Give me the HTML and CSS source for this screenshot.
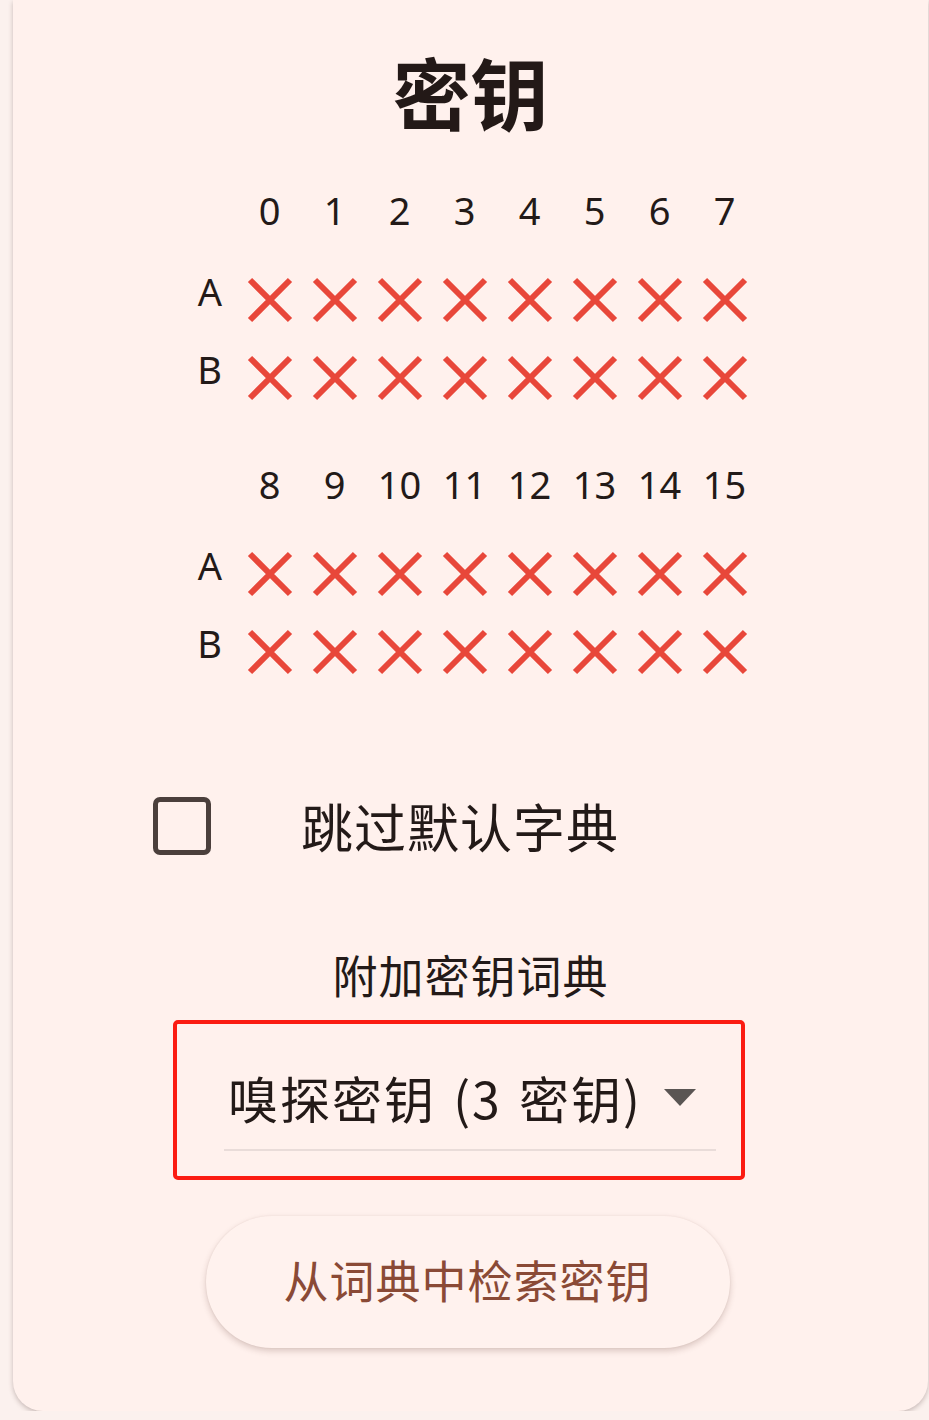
FILE: index.html
```html
<!DOCTYPE html>
<html lang="zh">
<head>
<meta charset="utf-8">
<link rel="stylesheet" href="styles.css">
</head>
<body>
<div class="card">
  <h1 class="title">密钥</h1>

  <div class="keygrid">
    <div class="cell head"></div>
    <div class="cell head">0</div><div class="cell head">1</div><div class="cell head">2</div><div class="cell head">3</div>
    <div class="cell head">4</div><div class="cell head">5</div><div class="cell head">6</div><div class="cell head">7</div>

    <div class="cell lbl">A</div>
    <div class="cell x"><svg viewBox="0 0 46 46"><path d="M3 3L43 43M43 3L3 43"/></svg></div>
    <div class="cell x"><svg viewBox="0 0 46 46"><path d="M3 3L43 43M43 3L3 43"/></svg></div>
    <div class="cell x"><svg viewBox="0 0 46 46"><path d="M3 3L43 43M43 3L3 43"/></svg></div>
    <div class="cell x"><svg viewBox="0 0 46 46"><path d="M3 3L43 43M43 3L3 43"/></svg></div>
    <div class="cell x"><svg viewBox="0 0 46 46"><path d="M3 3L43 43M43 3L3 43"/></svg></div>
    <div class="cell x"><svg viewBox="0 0 46 46"><path d="M3 3L43 43M43 3L3 43"/></svg></div>
    <div class="cell x"><svg viewBox="0 0 46 46"><path d="M3 3L43 43M43 3L3 43"/></svg></div>
    <div class="cell x"><svg viewBox="0 0 46 46"><path d="M3 3L43 43M43 3L3 43"/></svg></div>

    <div class="cell lbl">B</div>
    <div class="cell x"><svg viewBox="0 0 46 46"><path d="M3 3L43 43M43 3L3 43"/></svg></div>
    <div class="cell x"><svg viewBox="0 0 46 46"><path d="M3 3L43 43M43 3L3 43"/></svg></div>
    <div class="cell x"><svg viewBox="0 0 46 46"><path d="M3 3L43 43M43 3L3 43"/></svg></div>
    <div class="cell x"><svg viewBox="0 0 46 46"><path d="M3 3L43 43M43 3L3 43"/></svg></div>
    <div class="cell x"><svg viewBox="0 0 46 46"><path d="M3 3L43 43M43 3L3 43"/></svg></div>
    <div class="cell x"><svg viewBox="0 0 46 46"><path d="M3 3L43 43M43 3L3 43"/></svg></div>
    <div class="cell x"><svg viewBox="0 0 46 46"><path d="M3 3L43 43M43 3L3 43"/></svg></div>
    <div class="cell x"><svg viewBox="0 0 46 46"><path d="M3 3L43 43M43 3L3 43"/></svg></div>
  </div>

  <div class="keygrid second">
    <div class="cell head"></div>
    <div class="cell head">8</div><div class="cell head">9</div><div class="cell head">10</div><div class="cell head">11</div>
    <div class="cell head">12</div><div class="cell head">13</div><div class="cell head">14</div><div class="cell head">15</div>

    <div class="cell lbl">A</div>
    <div class="cell x"><svg viewBox="0 0 46 46"><path d="M3 3L43 43M43 3L3 43"/></svg></div>
    <div class="cell x"><svg viewBox="0 0 46 46"><path d="M3 3L43 43M43 3L3 43"/></svg></div>
    <div class="cell x"><svg viewBox="0 0 46 46"><path d="M3 3L43 43M43 3L3 43"/></svg></div>
    <div class="cell x"><svg viewBox="0 0 46 46"><path d="M3 3L43 43M43 3L3 43"/></svg></div>
    <div class="cell x"><svg viewBox="0 0 46 46"><path d="M3 3L43 43M43 3L3 43"/></svg></div>
    <div class="cell x"><svg viewBox="0 0 46 46"><path d="M3 3L43 43M43 3L3 43"/></svg></div>
    <div class="cell x"><svg viewBox="0 0 46 46"><path d="M3 3L43 43M43 3L3 43"/></svg></div>
    <div class="cell x"><svg viewBox="0 0 46 46"><path d="M3 3L43 43M43 3L3 43"/></svg></div>

    <div class="cell lbl">B</div>
    <div class="cell x"><svg viewBox="0 0 46 46"><path d="M3 3L43 43M43 3L3 43"/></svg></div>
    <div class="cell x"><svg viewBox="0 0 46 46"><path d="M3 3L43 43M43 3L3 43"/></svg></div>
    <div class="cell x"><svg viewBox="0 0 46 46"><path d="M3 3L43 43M43 3L3 43"/></svg></div>
    <div class="cell x"><svg viewBox="0 0 46 46"><path d="M3 3L43 43M43 3L3 43"/></svg></div>
    <div class="cell x"><svg viewBox="0 0 46 46"><path d="M3 3L43 43M43 3L3 43"/></svg></div>
    <div class="cell x"><svg viewBox="0 0 46 46"><path d="M3 3L43 43M43 3L3 43"/></svg></div>
    <div class="cell x"><svg viewBox="0 0 46 46"><path d="M3 3L43 43M43 3L3 43"/></svg></div>
    <div class="cell x"><svg viewBox="0 0 46 46"><path d="M3 3L43 43M43 3L3 43"/></svg></div>
  </div>

  <label class="check-row">
    <span class="checkbox"></span>
    <span class="check-label">跳过默认字典</span>
  </label>

  <div class="section-label">附加密钥词典</div>

  <div class="highlight">
    <div class="dropdown">
      <span class="dd-text">嗅探密钥 (3 密钥)</span>
      <span class="dd-arrow"></span>
    </div>
  </div>

  <div class="btn-wrap">
    <button class="btn">从词典中检索密钥</button>
  </div>
</div>
</body>
</html>
```

FILE: styles.css
```css
html, body {
  margin: 0;
  padding: 0;
  background: #fbf1ee;
  font-family: "Noto Sans CJK SC", "Noto Sans", sans-serif;
  color: #231a18;
}

.card {
  margin-left: 13px;
  width: 915px;
  height: 1411px;
  box-sizing: border-box;
  background: #fff1ed;
  border-radius: 0 0 30px 30px;
  box-shadow: 0 2px 5px rgba(70, 40, 35, 0.28);
  padding-top: 44px;
  overflow: hidden;
}

.title {
  margin: 0;
  text-align: center;
  font-size: 78px;
  line-height: 94px;
  font-weight: 700;
  color: #231917;
}

.keygrid {
  display: grid;
  grid-template-columns: 50px repeat(8, 65px);
  grid-template-rows: 88px 78px 78px;
  margin: 35px 0 0 174px;
  width: 570px;
}

.keygrid.second {
  margin-top: 30px;
}

.cell {
  display: flex;
  align-items: center;
  justify-content: center;
}

.head {
  font-family: "Noto Sans", sans-serif;
  font-size: 38px;
  color: #231a18;
  align-items: flex-start;
  padding-top: 11px;
  box-sizing: border-box;
  line-height: 52px;
}

.lbl {
  font-family: "Noto Sans", sans-serif;
  font-size: 38px;
  color: #231a18;
  padding-bottom: 19px;
  box-sizing: border-box;
  justify-content: flex-end;
  padding-right: 15px;
}

.x svg {
  width: 46px;
  height: 46px;
  display: block;
}

.x path {
  stroke: #e8473a;
  stroke-width: 6;
  fill: none;
}

.check-row {
  display: flex;
  align-items: center;
  margin-top: 106px;
  padding-left: 140px;
  height: 58px;
}

.checkbox {
  width: 58px;
  height: 58px;
  box-sizing: border-box;
  border: 5px solid #4b3f3c;
  border-radius: 7px;
  flex: none;
}

.check-label {
  margin-left: 90px;
  font-size: 52px;
  line-height: 58px;
  letter-spacing: 1px;
  color: #231a18;
}

.section-label {
  margin-top: 91px;
  text-align: center;
  font-size: 45px;
  line-height: 58px;
  letter-spacing: 1px;
  color: #231a18;
}

.highlight {
  margin: 16px 0 0 160px;
  width: 572px;
  height: 160px;
  box-sizing: border-box;
  border: 4px solid #fb1c12;
  border-radius: 5px;
  padding: 43px 0 0 47px;
}

.dropdown {
  width: 492px;
  display: flex;
  align-items: center;
  border-bottom: 2px solid #e9dcd9;
  padding: 0 0 22px 4px;
  box-sizing: border-box;
}

.dd-text {
  font-size: 50px;
  line-height: 60px;
  letter-spacing: 2px;
  word-spacing: 4px;
  color: #231a18;
}

.dd-arrow {
  margin-left: 22px;
  width: 0;
  height: 0;
  border-left: 16px solid transparent;
  border-right: 16px solid transparent;
  border-top: 17px solid #5a5553;
}

.btn-wrap {
  display: flex;
  justify-content: center;
  margin-top: 36px;
}

.btn {
  width: 524px;
  height: 132px;
  border: none;
  border-radius: 66px;
  background: #fff2ee;
  box-shadow: 0 3px 6px rgba(90, 50, 40, 0.22), 0 0 2px rgba(90, 50, 40, 0.08);
  font-family: "Noto Sans CJK SC", sans-serif;
  font-size: 45px;
  letter-spacing: 1px;
  color: #8a4a36;
  margin-left: -6px;
  padding: 0 0 6px 0;
}
```
